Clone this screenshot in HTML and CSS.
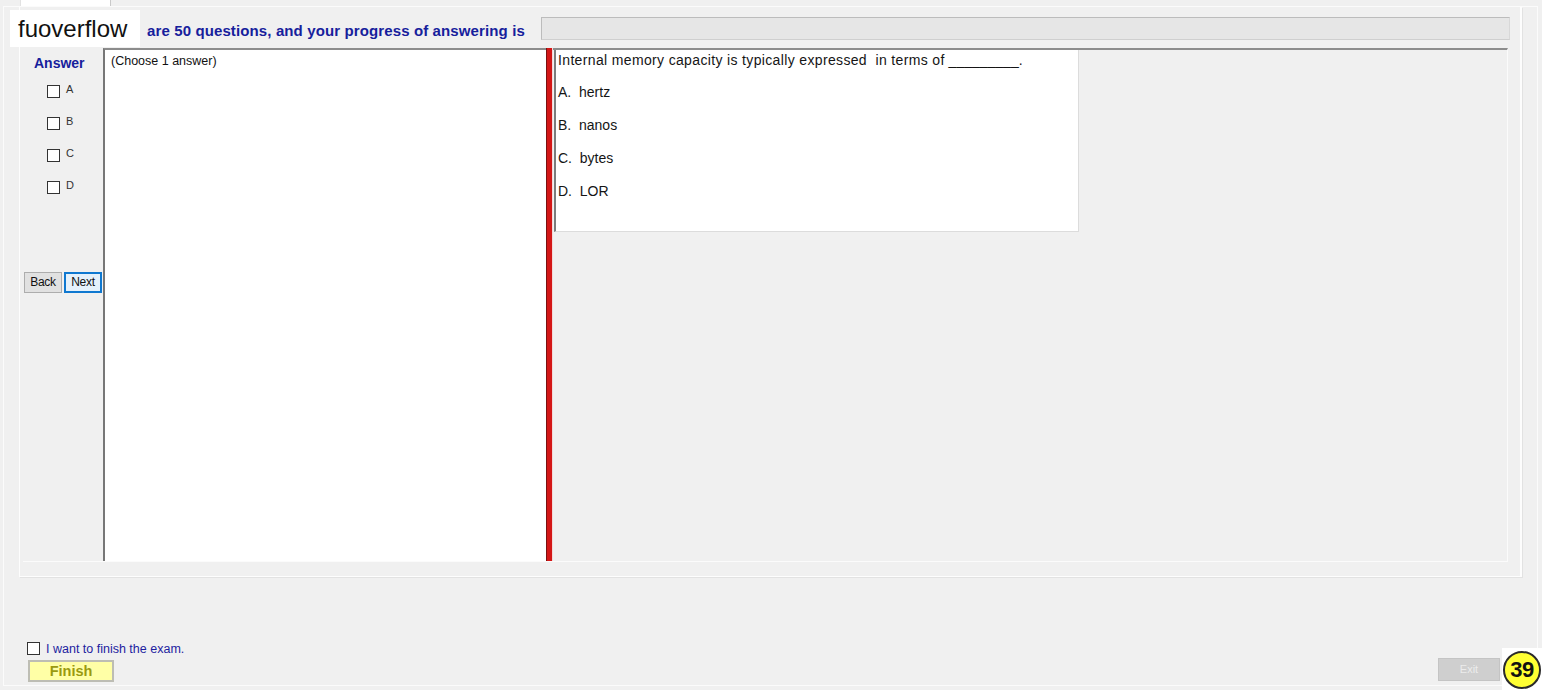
FILE: index.html
```html
<!DOCTYPE html>
<html>
<head>
<meta charset="utf-8">
<title>Exam</title>
<link rel="stylesheet" href="styles.css">
</head>
<body>
<div class="tabs"><div class="tab"></div></div>
<div class="window">
  <div class="group">
    <div class="header">
      <div class="progress-text">are 50 questions, and your progress of answering is</div>
      <div class="progress-bar"></div>
    </div>
    <div class="main">
      <div class="answers">
        <div class="ans-title">Answer</div>
        <div class="opt-row"><span class="box"></span><span class="opt-label">A</span></div>
        <div class="opt-row"><span class="box"></span><span class="opt-label">B</span></div>
        <div class="opt-row"><span class="box"></span><span class="opt-label">C</span></div>
        <div class="opt-row"><span class="box"></span><span class="opt-label">D</span></div>
        <div class="nav">
          <div class="btn">Back</div>
          <div class="btn btn-active">Next</div>
        </div>
      </div>
      <div class="choose">(Choose 1 answer)</div>
      <div class="divider"></div>
      <div class="qarea">
        <div class="qbox">
          <div class="qtext"><span class="qwords">Internal memory capacity is typically expressed&nbsp; in terms of</span> _________.</div>
          <div class="qopt">A.&nbsp; hertz</div>
          <div class="qopt">B.&nbsp; nanos</div>
          <div class="qopt">C.&nbsp; bytes</div>
          <div class="qopt">D.&nbsp; LOR</div>
        </div>
      </div>
    </div>
  </div>
  <div class="footer">
    <div class="footer-left">
      <div class="finish-row"><span class="box box-finish"></span><span class="finish-label">I want to finish the exam.</span></div>
      <div class="finish-btn">Finish</div>
    </div>
    <div class="exit-btn">Exit</div>
  </div>
</div>
<div class="brand">fuoverflow</div>
<div class="counter"><div class="circle">39</div></div>
</body>
</html>
```
FILE: styles.css
```css
* { box-sizing: border-box; }
html, body { margin: 0; padding: 0; }
body {
  width: 1542px;
  height: 690px;
  overflow: hidden;
  background: #f0f0f0;
  font-family: "Liberation Sans", Arial, sans-serif;
  position: relative;
  color: #111;
}
.tabs {
  height: 6px;
  padding-left: 20px;
  display: flex;
}
.tab {
  width: 91px;
  height: 6px;
  background: #fff;
  border-left: 1px solid #e2e2e2;
  border-right: 1px solid #c9c9c9;
}
.window {
  margin-left: 3px;
  width: 1535px;
  height: 680px;
  border: 1px solid #fbfbfb;
  display: flex;
  flex-direction: column;
}
.group {
  margin-left: 15px;
  width: 1503px;
  height: 570px;
  border-left: 1px solid #fdfdfd;
  border-right: 2px solid #fdfdfd;
  border-bottom: 1px solid #fdfdfd;
  box-shadow: 1px 1px 0 #e2e2e2;
  padding: 0 12px 0 3px;
  display: flex;
  flex-direction: column;
}
.header {
  height: 41px;
  padding-top: 10px;
  display: flex;
  align-items: flex-start;
}
.progress-text {
  margin-left: 124px;
  margin-top: 5px;
  font-size: 15px;
  line-height: 18px;
  font-weight: bold;
  letter-spacing: 0.12px;
  color: #16209c;
  white-space: nowrap;
}
.progress-bar {
  margin-left: auto;
  margin-right: -2px;
  width: 969px;
  height: 23px;
  background: #e6e6e6;
  border: 1px solid #bcbcbc;
  border-right-color: #d8d8d8;
  border-bottom-color: #cfcfcf;
}
.main {
  height: 514px;
  display: flex;
  border-bottom: 1px solid #fbfbfb;
}
.answers {
  width: 80px;
  display: flex;
  flex-direction: column;
}
.ans-title {
  margin-top: 7px;
  padding-left: 11px;
  font-size: 14px;
  line-height: 16px;
  font-weight: bold;
  color: #16209c;
}
.opt-row {
  height: 32px;
  display: flex;
  align-items: center;
  padding-left: 24px;
  gap: 6px;
}
.ans-title + .opt-row { margin-top: 4px; }
.box {
  width: 13px;
  height: 13px;
  background: #fff;
  border: 1px solid #333;
  display: inline-block;
}
.opt-label {
  font-size: 11px;
  color: #333;
  margin-top: -5px;
}
.nav {
  margin-top: 69px;
  padding-left: 1px;
  display: flex;
  gap: 2px;
}
.btn {
  width: 38px;
  height: 21px;
  background: #e1e1e1;
  border: 1px solid #adadad;
  font-size: 12px;
  line-height: 19px;
  text-align: center;
  color: #111;
  letter-spacing: -0.3px;
}
.btn-active {
  background: #e5f1fb;
  border: 2px solid #0f78d0;
  line-height: 17px;
}
.choose {
  width: 443px;
  background: #fff;
  border-left: 2px solid #777;
  border-top: 2px solid #8c8c8c;
  padding: 4px 0 0 6px;
  font-size: 12.5px;
  line-height: 15px;
  color: #111;
}
.divider {
  width: 7px;
  background: #d41616;
  border-left: 1px solid #7a1010;
  border-right: 1px solid #f2d9d9;
}
.qarea {
  flex: 1;
  border-top: 2px solid #8c8c8c;
  border-right: 1px solid #fbfbfb;
  padding-left: 1px;
}
.qbox {
  width: 525px;
  height: 182px;
  background: #fff;
  border-left: 2px solid #7c7c7c;
  border-right: 1px solid #dcdcdc;
  border-bottom: 1px solid #dcdcdc;
  padding-left: 2px;
  font-size: 14px;
  color: #151515;
}
.qtext {
  line-height: 20px;
  white-space: nowrap;
  margin-bottom: 6px;
}
.qwords {
  letter-spacing: 0.35px;
}
.qopt {
  line-height: 33px;
}
.footer {
  flex: 1;
  display: flex;
  justify-content: space-between;
  align-items: flex-end;
  padding: 0 37px 3px 23px;
}
.footer-left {
  display: flex;
  flex-direction: column;
}
.finish-row {
  height: 14px;
  display: flex;
  align-items: center;
  gap: 6px;
  margin-bottom: 2px;
}
.box-finish {
  margin-top: -2px;
}
.finish-label {
  font-size: 12.5px;
  color: #1e1ea0;
  margin-top: 0;
}
.finish-btn {
  margin-top: 2px;
  margin-left: 1px;
  width: 86px;
  height: 22px;
  background: #ffffa6;
  border: 2px solid #bdbdb4;
  font-size: 14.5px;
  font-weight: bold;
  line-height: 18px;
  text-align: center;
  color: #9a9a10;
}
.exit-btn {
  width: 62px;
  height: 23px;
  background: #cfcfcf;
  border: 1px solid #c4c4c4;
  font-size: 11px;
  line-height: 21px;
  text-align: center;
  color: #ececec;
  margin-bottom: 1px;
}
.brand {
  position: absolute;
  left: 10px;
  top: 10px;
  width: 130px;
  height: 37px;
  background: #fff;
  font-family: "Liberation Sans", Arial, sans-serif;
  font-size: 24px;
  line-height: 38px;
  padding-left: 8px;
  color: #111;
}
.counter {
  position: absolute;
  left: 1502px;
  top: 648px;
  width: 40px;
  height: 42px;
  background: #fff;
  padding: 3px 0 0 1px;
}
.circle {
  width: 38px;
  height: 38px;
  border-radius: 50%;
  background: #ffff33;
  border: 2px solid #2a2a2a;
  font-size: 22px;
  font-weight: bold;
  line-height: 34px;
  text-align: center;
  color: #111;
  letter-spacing: -0.5px;
}
```
